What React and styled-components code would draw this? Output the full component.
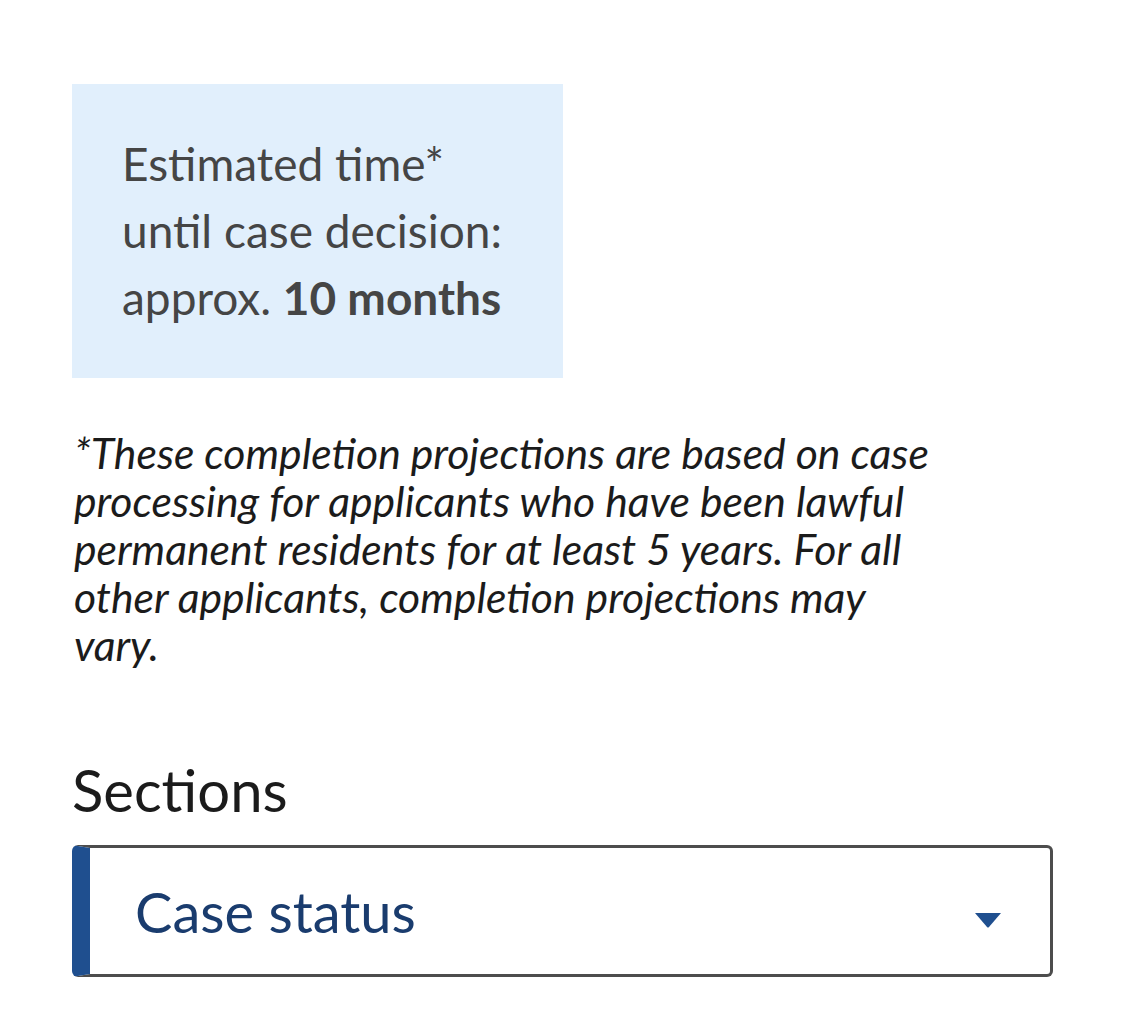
import React from "react";
import styled, { createGlobalStyle } from "styled-components";

const GlobalStyle = createGlobalStyle`
body{
  margin:0;
  background:#fff;
  font-family:"Source Sans Pro", Lato, "Noto Sans", sans-serif;
}
`;

const Page = styled.div`
padding:84px 72px 40px 72px;
display:flex;
flex-direction:column;
align-items:flex-start;
`;

// estimate box
const EstimateBox = styled.div`
width:491px;
box-sizing:border-box;
background-color:#e1effc;
padding:46px 50px 47px 50px;
color:#454545;
font-size:46px;
line-height:67px;
`;
const Strong = styled.strong`
font-weight:700;
`;

const Footnote = styled.p`
margin:51px 0 0 2px;
font-style:italic;
font-size:42.7px;
line-height:48px;
color:#1b1b1b;
`;

const SectionsLabel = styled.label`
margin-top:86px;
font-size:58px;
line-height:70px;
color:#1b1b1b;
`;

// select
const Select = styled.div`
margin-top:20px;
width:981px;
height:132px;
box-sizing:border-box;
display:flex;
align-items:center;
justify-content:space-between;
border:3px solid #4d4d4d;
border-left:18px solid #1f4f8f;
border-radius:6px;
padding:0 48px 0 45px;
`;
const SelectValue = styled.span`
font-size:56px;
color:#1a3c6e;
`;
const Caret = styled.svg`
width:28px;
height:16px;
margin-top:18px;
`;

export default function App(){
    return(
        <Page>
            <GlobalStyle/>
            <EstimateBox>
                Estimated time*<br/>
                until case decision:<br/>
                approx. <Strong>10 months</Strong>
            </EstimateBox>
            <Footnote>
                *These completion projections are based on case<br/>
                processing for applicants who have been lawful<br/>
                permanent residents for at least 5 years. For all<br/>
                other applicants, completion projections may<br/>
                vary.
            </Footnote>
            <SectionsLabel>Sections</SectionsLabel>
            <Select>
                <SelectValue>Case status</SelectValue>
                <Caret viewBox="0 0 28 16">
                    <path d="M1 1 H27 L15 15 Q14 16 13 15 Z" fill="#1f4f8f"/>
                </Caret>
            </Select>
        </Page>
    )
}
